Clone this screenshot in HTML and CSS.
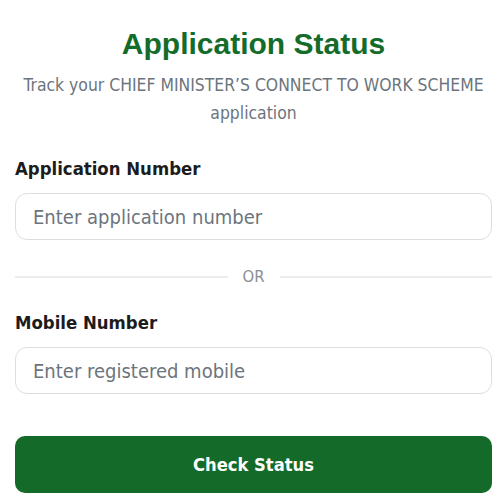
FILE: index.html
```html
<!DOCTYPE html>
<html lang="en">
<head>
    <meta charset="UTF-8">
    <meta name="viewport" content="width=device-width, initial-scale=1.0">
    <title>Application Status</title>
    <link rel="stylesheet" href="styles.css">
</head>
<body>
    <div class="card">
        <h1 class="title">Application Status</h1>
        <p class="subtitle">Track your CHIEF MINISTER’S CONNECT TO WORK SCHEME application</p>

        <form class="status-form" onsubmit="return false;">
            <label class="field-label" for="appNo">Application Number</label>
            <input type="text" id="appNo" class="field-input" placeholder="Enter application number">

            <div class="divider"><span>OR</span></div>

            <label class="field-label" for="mobile">Mobile Number</label>
            <input type="text" id="mobile" class="field-input" placeholder="Enter registered mobile">

            <button type="submit" class="btn-check">Check Status</button>
        </form>
    </div>
</body>
</html>
```

FILE: styles.css
```css
body {
    margin: 0;
    background-color: #fff;
    font-family: "DejaVu Sans Condensed", "DejaVu Sans", sans-serif;
    color: #1c1c1c;
}

.card {
    padding: 26px 8px 0 15px;
}

.title {
    margin: 0;
    text-align: center;
    font-family: "Liberation Sans", Arial, sans-serif;
    font-size: 30px;
    line-height: 36px;
    font-weight: bold;
    color: #146c2a;
}

.subtitle {
    margin: 9px 0 0;
    text-align: center;
    font-size: 17.4px;
    line-height: 28px;
    color: #6c757d;
}

.status-form {
    display: flex;
    flex-direction: column;
    margin-top: 30px;
}

.field-label {
    font-size: 18.4px;
    line-height: 24px;
    font-weight: bold;
    margin-bottom: 12px;
}

.field-input {
    height: 47px;
    box-sizing: border-box;
    padding: 0 17px;
    border: 1px solid #dedede;
    border-radius: 12px;
    font-family: inherit;
    font-size: 20px;
    color: #1c1c1c;
}

.field-input::placeholder {
    color: #6c757d;
}

.divider {
    display: flex;
    align-items: center;
    gap: 15px;
    margin: 27px 0 24px;
    font-size: 16.5px;
    line-height: 20px;
    color: #8a8f94;
}

.divider::before,
.divider::after {
    content: "";
    flex: 1;
    border-top: 2px solid #ececec;
}

.btn-check {
    margin-top: 42px;
    height: 57px;
    border: none;
    border-radius: 10px;
    background-color: #136a29;
    color: #fff;
    font-family: inherit;
    font-size: 18.2px;
    font-weight: bold;
    cursor: pointer;
}
```
